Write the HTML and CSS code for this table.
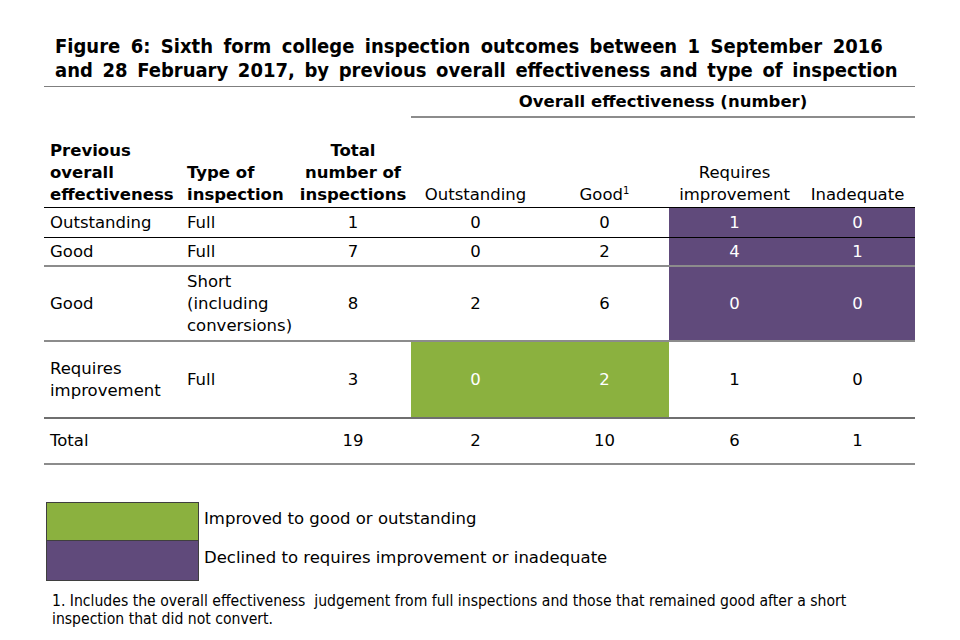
FILE: index.html
```html
<!DOCTYPE html>
<html>
<head>
<meta charset="utf-8">
<link rel="stylesheet" href="styles.css">
</head>
<body>
<div class="figure">
  <h1 class="title"><span class="title-l1">Figure 6: Sixth form college inspection outcomes between 1 September 2016</span><br>and 28 February 2017, by previous overall effectiveness and type of inspection</h1>
  <table class="tbl">
    <colgroup>
      <col class="c1"><col class="c2"><col class="c3"><col class="c4"><col class="c5"><col class="c6"><col class="c7">
    </colgroup>
    <thead>
      <tr class="group-row">
        <th colspan="3"></th>
        <th colspan="4" class="group">Overall effectiveness (number)</th>
      </tr>
      <tr class="head-row">
        <th class="left b">Previous<br>overall<br>effectiveness</th>
        <th class="left2 b">Type of<br>inspection</th>
        <th class="b">Total<br>number of<br>inspections</th>
        <th class="n">Outstanding</th>
        <th class="n">Good<sup>1</sup></th>
        <th class="n">Requires<br>improvement</th>
        <th class="n">Inadequate</th>
      </tr>
    </thead>
    <tbody>
      <tr class="r1">
        <td class="left">Outstanding</td><td class="left2">Full</td><td>1</td><td>0</td><td>0</td><td class="pu">1</td><td class="pu">0</td>
      </tr>
      <tr class="r2">
        <td class="left">Good</td><td class="left2">Full</td><td>7</td><td>0</td><td>2</td><td class="pu">4</td><td class="pu">1</td>
      </tr>
      <tr class="r3">
        <td class="left">Good</td><td class="left2">Short<br>(including<br>conversions)</td><td>8</td><td>2</td><td>6</td><td class="pu">0</td><td class="pu">0</td>
      </tr>
      <tr class="r4">
        <td class="left">Requires<br>improvement</td><td class="left2">Full</td><td>3</td><td class="gr">0</td><td class="gr">2</td><td>1</td><td>0</td>
      </tr>
      <tr class="r5">
        <td class="left">Total</td><td class="left2"></td><td>19</td><td>2</td><td>10</td><td>6</td><td>1</td>
      </tr>
    </tbody>
  </table>
  <div class="legend">
    <div class="legend-item"><span class="swatch sw-green"></span><span class="legend-text">Improved to good or outstanding</span></div>
    <div class="legend-item"><span class="swatch sw-purple"></span><span class="legend-text">Declined to requires improvement or inadequate</span></div>
  </div>
  <p class="note">1. Includes the overall effectiveness&nbsp; judgement from full inspections and those that remained good after a short<br>inspection that did not convert.</p>
</div>
</body>
</html>
```
FILE: styles.css
```css
html, body {
  margin: 0;
  padding: 0;
  background: #ffffff;
}
body {
  font-family: "DejaVu Sans", sans-serif;
  color: #000;
  width: 960px;
  height: 640px;
  overflow: hidden;
}
.figure {
  padding: 34px 0 0 44px;
  width: 871px;
}
.title {
  margin: 0;
  padding: 0 0 4px 11px;
  font-family: "DejaVu Sans Condensed", "DejaVu Sans", sans-serif;
  font-size: 20px;
  line-height: 24px;
  font-weight: bold;
  word-spacing: 3.4px;
  white-space: nowrap;
  border-bottom: 1px solid #7f7f7f;
}
.title-l1 {
  word-spacing: 4.2px;
}
.tbl {
  border-collapse: collapse;
  width: 871px;
  table-layout: fixed;
  font-size: 16.5px;
  line-height: 22px;
}
.c1 { width: 139px; }
.c2 { width: 112px; }
.c3 { width: 116px; }
.c4 { width: 129px; }
.c5 { width: 129px; }
.c6 { width: 131px; }
.c7 { width: 115px; }
.tbl th, .tbl td {
  padding: 0;
  text-align: center;
  white-space: nowrap;
}
.group-row th {
  height: 29px;
  vertical-align: middle;
}
.group {
  font-weight: bold;
  border-bottom: 2px solid #8c8c8c;
}
.head-row th {
  height: 88px;
  vertical-align: bottom;
  padding-bottom: 1px;
  border-bottom: 1px solid #000;
}
.head-row .b { font-weight: bold; }
.head-row .n { font-weight: normal; }
sup {
  font-size: 10px;
  line-height: 0;
  vertical-align: 6px;
}
.tbl .left { text-align: left; padding-left: 6px; }
.tbl .left2 { text-align: left; padding-left: 4px; }
.tbl td { vertical-align: middle; }
.r1 td { height: 29px; border-bottom: 1px solid #000; }
.r2 td { height: 27px; border-bottom: 2px solid #8c8c8c; }
.r3 td { height: 73px; border-bottom: 2px solid #8c8c8c; }
.r4 td { height: 75px; border-bottom: 2px solid #6f6f6f; }
.r5 td { height: 44px; border-bottom: 2px solid #8c8c8c; }
.tbl td.pu { background: #604a7b; color: #fff; }
.tbl td.gr { background: #8bb13f; color: #fff; }
.legend {
  margin: 37px 0 0 2px;
  display: flex;
  flex-direction: column;
}
.legend-item {
  display: flex;
  align-items: center;
  height: 39px;
}
.swatch {
  width: 151px;
  height: 100%;
  border: 1px solid #3f3f3f;
  box-sizing: content-box;
}
.legend-item:first-child .swatch { border-bottom: none; }
.sw-green { background: #8bb13f; }
.sw-purple { background: #604a7b; }
.legend-text {
  font-size: 16.5px;
  padding-left: 5px;
  margin-top: -6px;
  white-space: nowrap;
}
.note {
  margin: 12px 0 0 8px;
  font-family: "DejaVu Sans Condensed", "DejaVu Sans", sans-serif;
  font-size: 15.6px;
  line-height: 18px;
  white-space: nowrap;
}
```
